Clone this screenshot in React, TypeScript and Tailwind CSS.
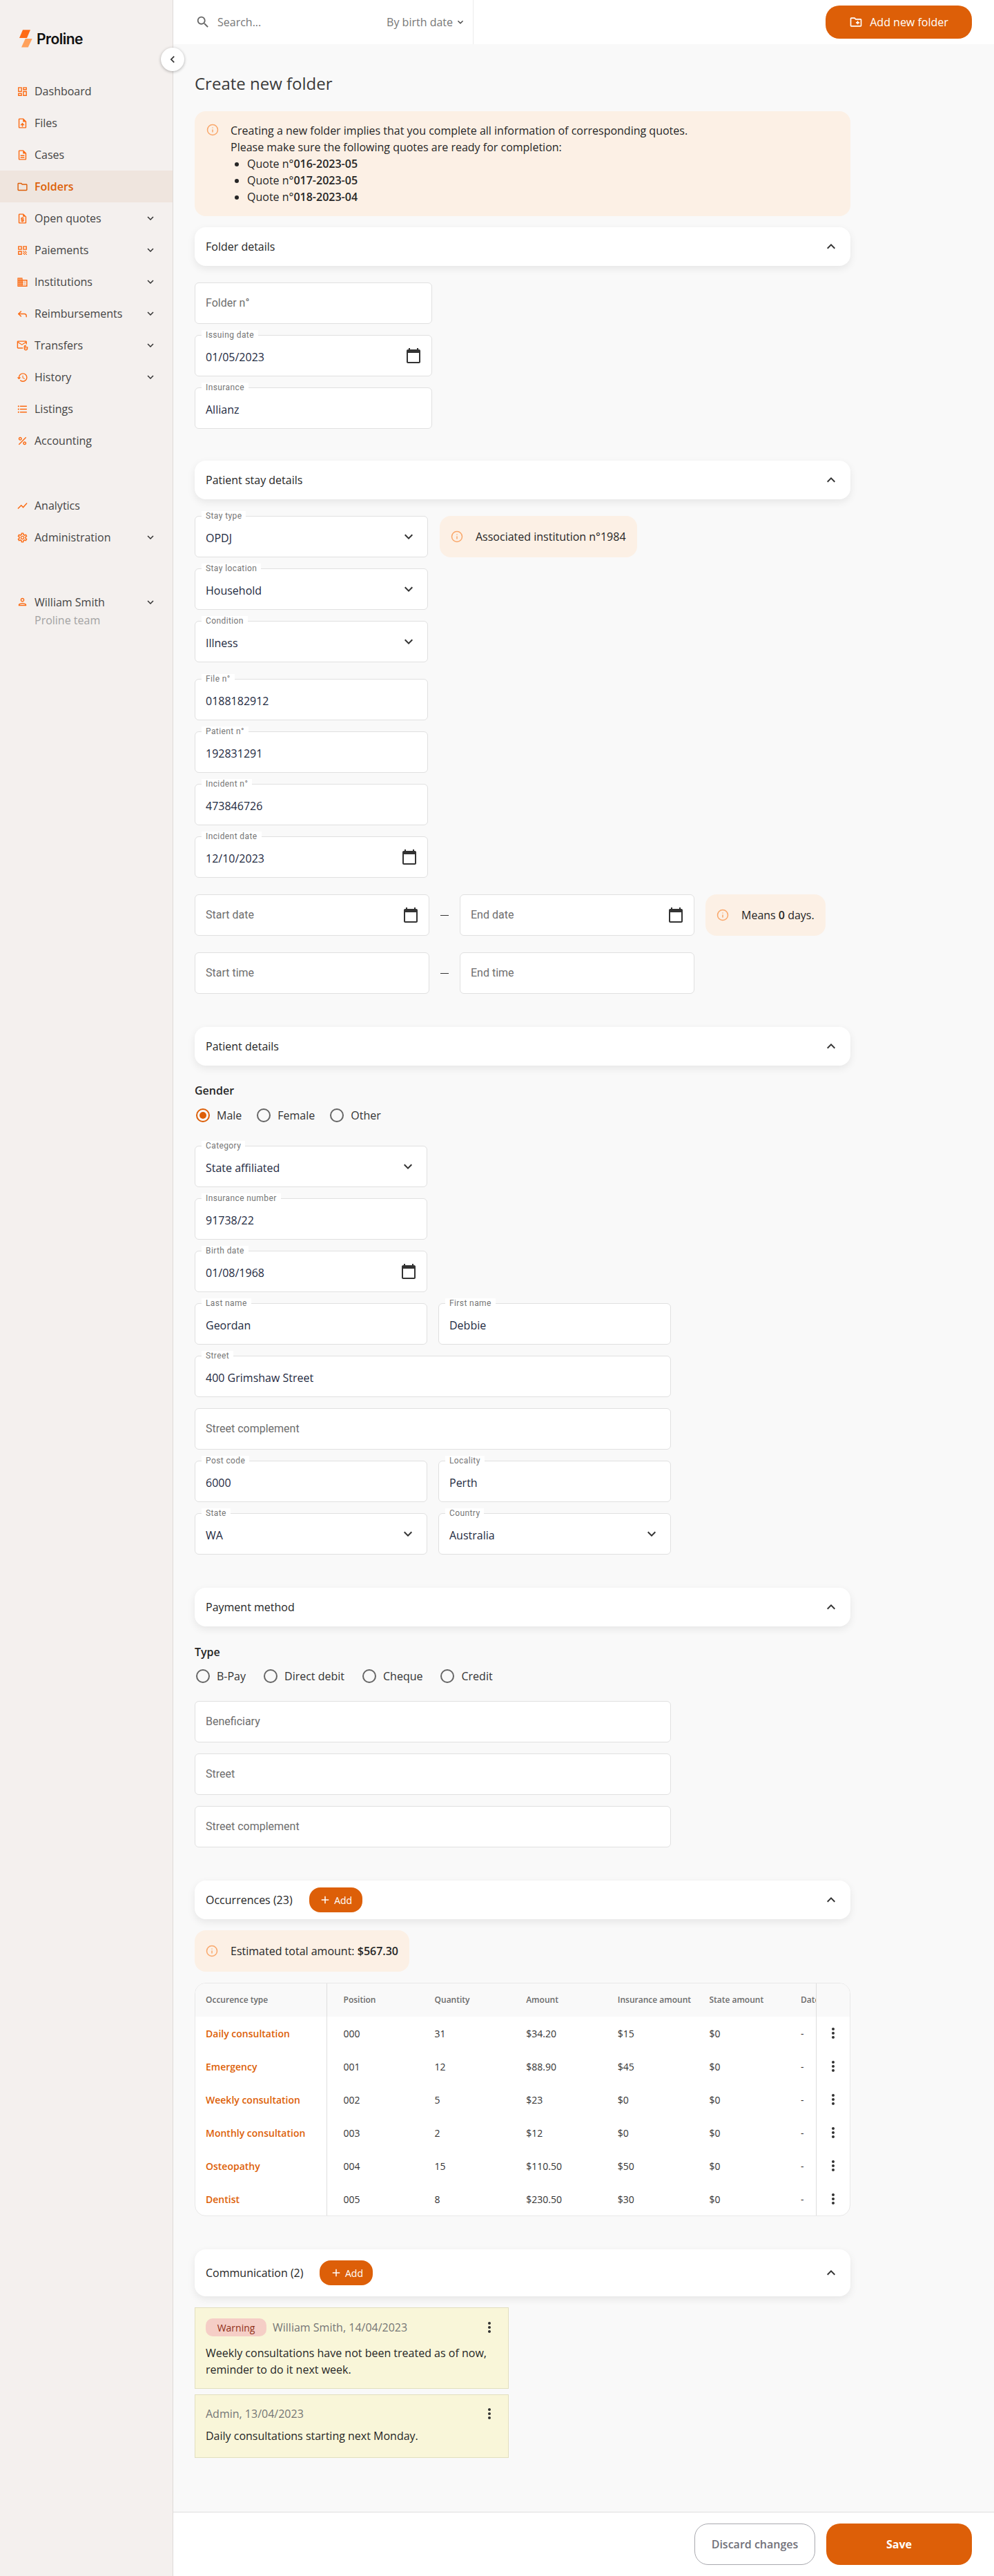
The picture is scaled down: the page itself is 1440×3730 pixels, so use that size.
import type { ReactNode } from "react"
import {
  MdOutlineDashboard,
  MdOutlineUploadFile,
  MdOutlineDescription,
  MdOutlineFolder,
  MdOutlineRequestQuote,
  MdOutlineQrCode,
  MdOutlineDomain,
  MdOutlineAttachEmail,
  MdHistory,
  MdOutlineFormatListBulleted,
  MdPercent,
  MdShowChart,
  MdOutlineSettings,
  MdOutlinePerson,
  MdKeyboardArrowDown,
  MdKeyboardArrowUp,
  MdChevronLeft,
  MdCalendarToday,
  MdOutlineCreateNewFolder,
  MdMoreVert,
  MdSearch,
  MdAdd,
} from "react-icons/md"
import { LuInfo, LuReply } from "react-icons/lu"

const navTop = [
  { icon: MdOutlineDashboard, label: "Dashboard" },
  { icon: MdOutlineUploadFile, label: "Files" },
  { icon: MdOutlineDescription, label: "Cases" },
  { icon: MdOutlineFolder, label: "Folders", active: true },
  { icon: MdOutlineRequestQuote, label: "Open quotes", arrow: true },
  { icon: MdOutlineQrCode, label: "Paiements", arrow: true },
  { icon: MdOutlineDomain, label: "Institutions", arrow: true },
  { icon: LuReply, label: "Reimbursements", arrow: true },
  { icon: MdOutlineAttachEmail, label: "Transfers", arrow: true },
  { icon: MdHistory, label: "History", arrow: true },
  { icon: MdOutlineFormatListBulleted, label: "Listings" },
  { icon: MdPercent, label: "Accounting" },
]

const navBottom = [
  { icon: MdShowChart, label: "Analytics" },
  { icon: MdOutlineSettings, label: "Administration", arrow: true },
]

const occurrences = [
  ["Daily consultation", "000", "31", "$34.20", "$15", "$0", "-"],
  ["Emergency", "001", "12", "$88.90", "$45", "$0", "-"],
  ["Weekly consultation", "002", "5", "$23", "$0", "$0", "-"],
  ["Monthly consultation", "003", "2", "$12", "$0", "$0", "-"],
  ["Osteopathy", "004", "15", "$110.50", "$50", "$0", "-"],
  ["Dentist", "005", "8", "$230.50", "$30", "$0", "-"],
]

function NavItem({ icon: Icon, label, active, arrow }: { icon: typeof MdHistory; label: string; active?: boolean; arrow?: boolean }) {
  return (
    <div className={`flex h-[46px] items-center pl-[24px] pr-[23px] ${active ? "bg-[#efe5de]" : ""}`}>
      <Icon className={`size-[17px] ${active ? "text-[#dd5f08]" : "text-[#fb6a12]"}`} />
      <span className={`ml-[9px] text-[16px] ${active ? "font-semibold text-[#dd5f08]" : "text-[#444444]"}`}>{label}</span>
      {arrow && <MdKeyboardArrowDown className="ml-auto size-[18px] text-[#333333]" />}
    </div>
  )
}

function Sidebar() {
  return (
    <aside className="relative flex w-[251px] shrink-0 flex-col border-r border-[#dedad8] bg-[#f4f0ee]">
      <div className="flex h-[109px] items-start pl-[28px] pt-[43px]">
        <svg width="20" height="26" viewBox="0 0 20 26">
          <polygon points="5,0.3 16,0.3 11,12 0,12" fill="#ff6a13" />
          <polygon points="8.7,13 18.7,13 12.7,25.5 3,25.5" fill="#ffa15c" />
        </svg>
        <span className="ml-[5px] font-['Inter'] text-[21px] font-semibold leading-[28px] tracking-[-0.5px] text-[#111111]">Proline</span>
      </div>
      <button className="absolute left-[233px] top-[69px] z-10 flex size-[34px] items-center justify-center rounded-full bg-white shadow-[0_1px_4px_rgba(0,0,0,0.3)]">
        <MdChevronLeft className="size-[20px] text-[#333333]" />
      </button>
      {navTop.map((item) => (
        <NavItem key={item.label} {...item} />
      ))}
      <div className="h-[48px]" />
      {navBottom.map((item) => (
        <NavItem key={item.label} {...item} />
      ))}
      <div className="mt-[59px] flex items-start pl-[24px] pr-[23px]">
        <MdOutlinePerson className="mt-[3px] size-[17px] text-[#fb6a12]" />
        <div className="ml-[9px]">
          <div className="text-[16px] leading-[24px] text-[#444444]">William Smith</div>
          <div className="mt-[2px] text-[16px] leading-[24px] text-[#a3a3a3]">Proline team</div>
        </div>
        <MdKeyboardArrowDown className="ml-auto mt-[3px] size-[18px] text-[#333333]" />
      </div>
    </aside>
  )
}

function TopBar() {
  return (
    <header className="flex h-[64px] shrink-0 items-center justify-between bg-white pr-[32px]">
      <div className="flex h-full w-[435px] items-center border-r border-[#ececec] pl-[32px] pr-[10px] text-[#777777]">
        <MdSearch className="size-[22px] text-[#666666]" />
        <span className="ml-[10px] text-[16px]">Search...</span>
        <span className="ml-auto text-[16px]">By birth date</span>
        <MdKeyboardArrowDown className="ml-[3px] size-[16px] text-[#444444]" />
      </div>
      <button className="flex h-[48px] w-[212px] items-center justify-center gap-[10px] rounded-[20px] bg-[#dd5f08] text-[16px] text-white">
        <MdOutlineCreateNewFolder className="size-[20px]" />
        Add new folder
      </button>
    </header>
  )
}

function Field({
  label,
  value,
  placeholder,
  icon,
  className,
}: {
  label?: string
  value?: string
  placeholder?: string
  icon?: "calendar" | "arrow"
  className: string
}) {
  return (
    <div className={`relative flex h-[60px] items-center rounded-[6px] border border-[#e0e0e0] bg-white pl-[15px] pr-[14px] text-[16px] ${className}`}>
      {label && (
        <span className="absolute left-[9px] top-[-8px] bg-white px-[6px] font-['Roboto'] text-[12px] leading-[15px] tracking-[0.4px] text-[#757575]">
          {label}
        </span>
      )}
      {value ? (
        <span className="pt-[4px] text-[#1e2a3f]">{value}</span>
      ) : (
        <span className="font-['Roboto'] text-[#6e6e6e]">{placeholder}</span>
      )}
      {icon === "calendar" && <MdCalendarToday className="ml-auto size-[24px] text-[#333333]" />}
      {icon === "arrow" && <MdKeyboardArrowDown className="ml-auto mr-[1px] size-[24px] text-[#333333]" />}
    </div>
  )
}

function SectionBar({ title, add, className }: { title: string; add?: boolean; className: string }) {
  return (
    <div className={`flex w-[950px] items-center rounded-[16px] bg-white pl-[16px] pr-[16px] shadow-[0_4px_12px_rgba(0,0,0,0.08)] ${className}`}>
      <span className="text-[16px] text-[#262626]">{title}</span>
      {add && (
        <button className="ml-[24px] flex h-[36px] w-[77px] items-center justify-center gap-[4px] rounded-[16px] bg-[#dd5f08] text-[14px] font-medium text-white">
          <MdAdd className="size-[18px]" />
          Add
        </button>
      )}
      <MdKeyboardArrowUp className="ml-auto size-[24px] text-[#333333]" />
    </div>
  )
}

function InfoNote({ children }: { children: ReactNode }) {
  return (
    <div className="flex h-[60px] w-fit items-center rounded-[16px] bg-[#fcf0e5] pl-[16px] pr-[16px] text-[16px] text-[#262626]">
      <LuInfo className="mr-[18px] size-[18px] text-[#f9a76a]" />
      <span>{children}</span>
    </div>
  )
}

function Radio({ label, checked }: { label: string; checked?: boolean }) {
  return (
    <label className="flex items-center">
      <span className={`ml-[2px] flex size-[20px] items-center justify-center rounded-full border-2 ${checked ? "border-[#dd5f08]" : "border-[#666666]"}`}>
        {checked && <span className="size-[10px] rounded-full bg-[#dd5f08]" />}
      </span>
      <span className="ml-[10px] text-[16px] leading-[24px] text-[#333333]">{label}</span>
    </label>
  )
}

function OccurrenceTable() {
  const th = "h-[48px] overflow-hidden whitespace-nowrap pl-[24px] text-left text-[12px] font-semibold text-[#6b6b6b]"
  const td = "h-[48px] overflow-hidden whitespace-nowrap pl-[24px] text-[14px] text-[#333333]"
  return (
    <div className="mt-[16px] w-[950px] overflow-hidden rounded-[16px] border border-[#e8e8e8] bg-white">
      <table className="w-full table-fixed border-collapse">
        <colgroup>
          <col className="w-[190px]" />
          <col className="w-[132.6px]" />
          <col className="w-[132.6px]" />
          <col className="w-[132.6px]" />
          <col className="w-[132.6px]" />
          <col className="w-[132.6px]" />
          <col className="w-[47px]" />
          <col className="w-[48px]" />
        </colgroup>
        <thead className="bg-[#f9f9f9]">
          <tr>
            <th className="h-[48px] border-r border-[#dedede] pl-[15px] text-left text-[12px] font-semibold text-[#6b6b6b]">Occurence type</th>
            <th className={th}>Position</th>
            <th className={th}>Quantity</th>
            <th className={th}>Amount</th>
            <th className={th}>Insurance amount</th>
            <th className={th}>State amount</th>
            <th className={th}>Date</th>
            <th className="border-l border-[#dedede]" />
          </tr>
        </thead>
        <tbody>
          {occurrences.map((row) => (
            <tr key={row[0]}>
              <td className="h-[48px] border-r border-[#dedede] pl-[15px] text-[14px] font-semibold text-[#dd5f08]">{row[0]}</td>
              {row.slice(1).map((cell, i) => (
                <td key={i} className={td}>{cell}</td>
              ))}
              <td className="border-l border-[#dedede]">
                <MdMoreVert className="mx-auto size-[24px] text-[#333333]" />
              </td>
            </tr>
          ))}
        </tbody>
      </table>
    </div>
  )
}

function Note({ badge, author, text, className }: { badge?: boolean; author: string; text: string[]; className: string }) {
  return (
    <div className={`flex w-[455px] flex-col border border-[#e2dfbf] bg-[#f9f6d9] px-[15px] pt-[15px] ${className}`}>
      <div className="flex items-center">
        {badge && (
          <span className="mr-[9px] flex h-[26px] w-[88px] items-center justify-center rounded-[10px] bg-[#f5cec6] text-[14px] font-medium text-[#8f2f17]">
            Warning
          </span>
        )}
        <span className="text-[16px] text-[#767676]">{author}</span>
        <MdMoreVert className="ml-auto size-[24px] text-[#333333]" />
      </div>
      {text.map((line) => (
        <div key={line} className="text-[16px] leading-[24px] text-[#262626]">{line}</div>
      ))}
    </div>
  )
}

export default function App() {
  return (
    <div className="flex min-h-[3730px] w-[1440px] bg-[#f9f9f9] font-['Open_Sans',sans-serif]">
      <Sidebar />
      <main className="flex min-w-0 flex-1 flex-col">
        <TopBar />
        <div className="flex-1 pl-[31px]">
          <h1 className="mt-[41px] text-[24px] leading-[32px] text-[#3a3a3a]">Create new folder</h1>

          <div className="mt-[24px] flex w-[950px] rounded-[16px] bg-[#fcf0e5] py-[16px] pl-[17px] text-[16px] leading-[24px] text-[#262626]">
            <LuInfo className="mt-[2px] size-[18px] shrink-0 text-[#f9a76a]" />
            <div className="ml-[17px]">
              <p>Creating a new folder implies that you complete all information of corresponding quotes.</p>
              <p>Please make sure the following quotes are ready for completion:</p>
              <ul className="list-disc pl-[24px]">
                <li>Quote n°<b className="font-semibold">016-2023-05</b></li>
                <li>Quote n°<b className="font-semibold">017-2023-05</b></li>
                <li>Quote n°<b className="font-semibold">018-2023-04</b></li>
              </ul>
            </div>
          </div>

          <SectionBar title="Folder details" className="mt-[16px] h-[56px]" />
          <div className="mt-[24px] flex flex-col gap-[16px]">
            <Field placeholder="Folder n°" className="w-[344px]" />
            <Field label="Issuing date" value="01/05/2023" icon="calendar" className="w-[344px]" />
            <Field label="Insurance" value="Allianz" className="w-[344px]" />
          </div>

          <SectionBar title="Patient stay details" className="mt-[46px] h-[56px]" />
          <div className="mt-[24px] flex gap-[17px]">
            <Field label="Stay type" value="OPDJ" icon="arrow" className="w-[338px]" />
            <InfoNote>Associated institution n°1984</InfoNote>
          </div>
          <div className="mt-[16px] flex flex-col gap-[16px]">
            <Field label="Stay location" value="Household" icon="arrow" className="w-[338px]" />
            <Field label="Condition" value="Illness" icon="arrow" className="w-[338px]" />
          </div>
          <div className="mt-[24px] flex flex-col gap-[16px]">
            <Field label="File n°" value="0188182912" className="w-[338px]" />
            <Field label="Patient n°" value="192831291" className="w-[338px]" />
            <Field label="Incident n°" value="473846726" className="w-[338px]" />
            <Field label="Incident date" value="12/10/2023" icon="calendar" className="w-[338px]" />
          </div>
          <div className="mt-[24px] flex items-center">
            <Field placeholder="Start date" icon="calendar" className="w-[340px]" />
            <span className="mx-[16px] h-[1px] w-[12px] bg-[#333333]" />
            <Field placeholder="End date" icon="calendar" className="w-[340px]" />
            <div className="ml-[16px]">
              <InfoNote>Means <b className="font-semibold">0</b> days.</InfoNote>
            </div>
          </div>
          <div className="mt-[24px] flex items-center">
            <Field placeholder="Start time" className="w-[340px]" />
            <span className="mx-[16px] h-[1px] w-[12px] bg-[#333333]" />
            <Field placeholder="End time" className="w-[340px]" />
          </div>

          <SectionBar title="Patient details" className="mt-[48px] h-[56px]" />
          <div className="mt-[24px] text-[16px] font-semibold leading-[24px] text-[#262626]">Gender</div>
          <div className="mt-[12px] flex gap-[20px]">
            <Radio label="Male" checked />
            <Radio label="Female" />
            <Radio label="Other" />
          </div>
          <div className="mt-[32px] flex w-[690px] flex-wrap gap-x-[16px] gap-y-[16px]">
            <Field label="Category" value="State affiliated" icon="arrow" className="w-[337px]" />
            <div className="w-[337px]" />
            <Field label="Insurance number" value="91738/22" className="w-[337px]" />
            <div className="w-[337px]" />
            <Field label="Birth date" value="01/08/1968" icon="calendar" className="w-[337px]" />
            <div className="w-[337px]" />
            <Field label="Last name" value="Geordan" className="w-[337px]" />
            <Field label="First name" value="Debbie" className="w-[337px]" />
            <Field label="Street" value="400 Grimshaw Street" className="w-[690px]" />
            <Field placeholder="Street complement" className="w-[690px]" />
            <Field label="Post code" value="6000" className="w-[337px]" />
            <Field label="Locality" value="Perth" className="w-[337px]" />
            <Field label="State" value="WA" icon="arrow" className="w-[337px]" />
            <Field label="Country" value="Australia" icon="arrow" className="w-[337px]" />
          </div>

          <SectionBar title="Payment method" className="mt-[48px] h-[56px]" />
          <div className="mt-[25px] text-[16px] font-semibold leading-[24px] text-[#262626]">Type</div>
          <div className="mt-[11px] flex gap-[24px]">
            <Radio label="B-Pay" />
            <Radio label="Direct debit" />
            <Radio label="Cheque" />
            <Radio label="Credit" />
          </div>
          <div className="mt-[24px] flex flex-col gap-[16px]">
            <Field placeholder="Beneficiary" className="w-[690px]" />
            <Field placeholder="Street" className="w-[690px]" />
            <Field placeholder="Street complement" className="w-[690px]" />
          </div>

          <SectionBar title="Occurrences (23)" add className="mt-[48px] h-[56px]" />
          <div className="mt-[16px]">
            <InfoNote>Estimated total amount: <b className="font-semibold">$567.30</b></InfoNote>
          </div>
          <OccurrenceTable />

          <SectionBar title="Communication (2)" add className="mt-[48px] h-[68px]" />
          <Note
            badge
            author="William Smith, 14/04/2023"
            text={["Weekly consultations have not been treated as of now,", "reminder to do it next week."]}
            className="mt-[16px] h-[118px] [&>div:nth-child(2)]:mt-[12px]"
          />
          <Note
            author="Admin, 13/04/2023"
            text={["Daily consultations starting next Monday."]}
            className="mt-[8px] h-[92px] [&>div:nth-child(2)]:mt-[8px]"
          />
        </div>
        <footer className="flex h-[93px] shrink-0 items-start justify-end gap-[16px] border-t border-[#dedede] bg-white pr-[32px] pt-[16px]">
          <button className="h-[60px] w-[175px] rounded-[20px] border-[1.5px] border-[#a8a8ae] text-[16px] font-semibold text-[#71717a]">Discard changes</button>
          <button className="h-[60px] w-[211px] rounded-[20px] bg-[#dd5f08] text-[16px] font-bold text-white">Save</button>
        </footer>
      </main>
    </div>
  )
}
